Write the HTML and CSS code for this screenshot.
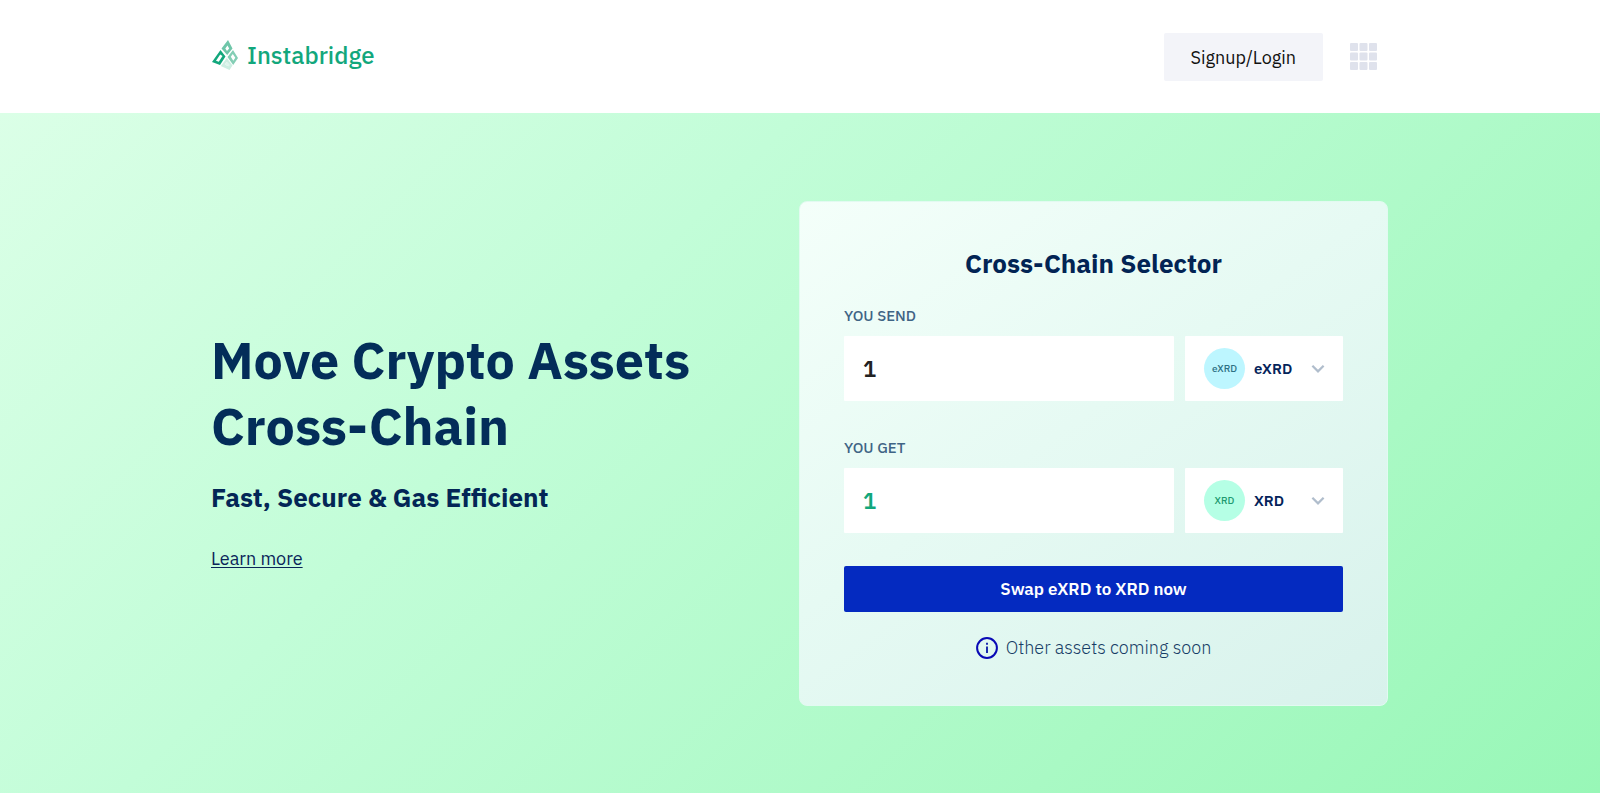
FILE: index.html
```html
<!DOCTYPE html>
<html lang="en">
<head>
<meta charset="utf-8">
<meta name="viewport" content="width=device-width, initial-scale=1">
<title>Instabridge</title>
<link rel="stylesheet" href="styles.css">
</head>
<body>
<header class="header">
  <div class="container header-inner">
    <a class="brand" href="#">
      <svg class="brand-mark" viewBox="0 0 28 32" aria-hidden="true">
        <path fill="#6fc6a9" fill-rule="evenodd" d="M18 1l4.500 8.500-5.300 6.500-5.700-6.500zM17.500 6.500l-2.200 3 1.700 2.500 2.200-2.600z"/>
        <path fill="#12a77c" fill-rule="evenodd" d="M10.500 11l5 6.500-5.500 8.500L2 23zM10.200 15.500l-4.200 6.200 2.800 1 3.700-5.700z"/>
        <path fill="#84ceb5" fill-rule="evenodd" d="M23 11l5 8-4.800 7-5.700-8zM22.800 15l-2 2.700 2.500 4 2-3z"/>
        <path fill="#cdeee2" fill-rule="evenodd" d="M16.800 19l5.700 7.500-3 4.500-8.700-4zM16.800 23l-2 2.600 3.700 1.700 1-1.400z"/>
        <path fill="#def4ec" d="M16.800 23l-2 2.600 3.700 1.700 1-1.400z"/>
      </svg>
      <span>Instabridge</span>
    </a>
    <div class="header-actions">
      <button class="login" type="button">Signup/Login</button>
      <button class="apps" type="button" aria-label="Apps">
        <svg viewBox="0 0 27 27" width="27" height="27" fill="#dfe2ec" aria-hidden="true">
          <rect width="8" height="8" rx="1"/><rect x="9.500" width="8" height="8" rx="1"/><rect x="19" width="8" height="8" rx="1"/>
          <rect y="9.500" width="8" height="8" rx="1"/><rect x="9.500" y="9.500" width="8" height="8" rx="1"/><rect x="19" y="9.500" width="8" height="8" rx="1"/>
          <rect y="19" width="8" height="8" rx="1"/><rect x="9.500" y="19" width="8" height="8" rx="1"/><rect x="19" y="19" width="8" height="8" rx="1"/>
        </svg>
      </button>
    </div>
  </div>
</header>
<main class="hero">
  <div class="container hero-inner">
    <section class="intro">
      <h1>Move Crypto Assets Cross-Chain</h1>
      <p class="tagline">Fast, Secure &amp; Gas Efficient</p>
      <a class="learn" href="#">Learn more</a>
    </section>
    <form class="card">
      <h2>Cross-Chain Selector</h2>
      <div class="field">
        <label for="send">YOU SEND</label>
        <div class="row">
          <input id="send" class="amount" type="text" value="1">
          <div class="asset">
            <span class="coin coin-exrd">eXRD</span>
            <select aria-label="Asset to send"><option>eXRD</option></select>
            <svg class="chevron" viewBox="0 0 12 8" aria-hidden="true"><path d="M1 1.500l5 5 5-5"/></svg>
          </div>
        </div>
      </div>
      <div class="field">
        <label for="get">YOU GET</label>
        <div class="row">
          <input id="get" class="amount amount-get" type="text" value="1">
          <div class="asset">
            <span class="coin coin-xrd">XRD</span>
            <select aria-label="Asset to get"><option>XRD</option></select>
            <svg class="chevron" viewBox="0 0 12 8" aria-hidden="true"><path d="M1 1.500l5 5 5-5"/></svg>
          </div>
        </div>
      </div>
      <button class="swap" type="button">Swap eXRD to XRD now</button>
      <p class="note">
        <svg viewBox="0 0 22 22" width="22" height="22" aria-hidden="true">
          <circle cx="11" cy="11" r="9.900" fill="none" stroke="#0909b5" stroke-width="2"/>
          <path d="M11 9.500v6.500M11 5.800v2" stroke="#1c2cae" stroke-width="2"/>
        </svg>
        <span>Other assets coming soon</span>
      </p>
    </form>
  </div>
</main>
</body>
</html>
```
FILE: styles.css
```css
* {
  box-sizing: border-box;
}

body {
  margin: 0;
  min-height: 100vh;
  display: flex;
  flex-direction: column;
  background: #fff;
  color: #032d59;
  font-family: "IBM Plex Sans", "Noto Sans", sans-serif;
  font-size: 18px;
}

button,
input,
select {
  font: inherit;
  border: 0;
}

.container {
  width: 100%;
  max-width: 1180px;
  margin: 0 auto;
  padding-right: 2px;
}

.header-inner {
  display: flex;
  align-items: center;
  justify-content: space-between;
  min-height: 113px;
  padding-right: 13px;
}

.brand {
  display: flex;
  align-items: center;
  gap: 9px;
  padding-bottom: 3px;
  color: #12a77c;
  font-size: 24px;
  font-weight: 500;
  text-decoration: none;
}

.brand-mark {
  width: 28px;
  height: 32px;
}

.header-actions {
  display: flex;
  align-items: center;
  gap: 27px;
}

.login {
  padding: 2px 27px 0;
  height: 48px;
  border-radius: 2px;
  background: #f3f4f9;
  color: #111;
}

.apps {
  display: flex;
  padding: 0;
  background: none;
}

.hero {
  flex: 1;
  display: flex;
  align-items: center;
  padding: 88px 0 87px;
  margin-bottom: 1px;
  background: linear-gradient(135deg, #dbffe7 0%, #c2fdd8 35%, #a9f9c4 75%, #98f7b7 100%);
}

.hero-inner {
  display: grid;
  grid-template-columns: 1fr 1fr;
  align-items: center;
}

h1,
h2,
p {
  margin: 0;
}

.intro {
  padding: 0 0 10px 1px;
}

h1 {
  font-size: 52px;
  font-weight: 700;
  line-height: 66px;
}

.tagline {
  margin-top: 20px;
  color: #032656;
  font-size: 26px;
  font-weight: 700;
  line-height: 36px;
}

.learn {
  display: inline-block;
  margin-top: 32px;
  color: #0a2459;
  line-height: 24px;
  text-underline-offset: 2px;
}

.card {
  padding: 43px 44px 45px;
  border: 1px solid #e2faf1;
  border-radius: 8px;
  background: linear-gradient(145deg, #f4fffa 0%, #e6faf3 45%, #d8f2ec 100%);
}

h2 {
  color: #022454;
  font-size: 26px;
  font-weight: 700;
  line-height: 36px;
  text-align: center;
}

.field {
  margin-top: 21px;
}

.field + .field {
  margin-top: 33px;
}

.field label {
  display: block;
  padding-bottom: 6px;
  color: #3f6485;
  font-size: 15px;
  font-weight: 500;
  line-height: 28px;
}

.row {
  display: grid;
  grid-template-columns: 1fr 158px;
  gap: 11px;
}

.amount {
  min-width: 0;
  height: 65px;
  padding: 0 19px;
  border-radius: 1px;
  background: #fff;
  color: #222;
  font-size: 22px;
  font-weight: 600;
}

.amount-get {
  color: #12a77c;
}

.asset {
  display: flex;
  align-items: center;
  padding: 0 18px 0 19px;
  border-radius: 1px;
  background: #fff;
}

.coin {
  flex: none;
  display: grid;
  place-items: center;
  width: 41px;
  height: 41px;
  margin-right: 9px;
  border-radius: 50%;
  font-size: 10px;
  font-weight: 500;
}

.coin-exrd {
  background: #bdf6ff;
  color: #2d7184;
}

.coin-xrd {
  background: #b5ffe5;
  color: #219a70;
}

.asset select {
  flex: 1;
  min-width: 0;
  padding: 0;
  appearance: none;
  background: none;
  color: #04235a;
  font-size: 15px;
  font-weight: 600;
}

.chevron {
  flex: none;
  width: 14px;
  height: 9px;
  fill: none;
  stroke: #b0bdcc;
  stroke-width: 2;
}

.swap {
  width: 100%;
  height: 46px;
  margin-top: 33px;
  border-radius: 2px;
  background: #042ac0;
  color: #fff;
  font-size: 17px;
  font-weight: 600;
}

.note {
  display: flex;
  align-items: center;
  justify-content: center;
  gap: 8px;
  margin-top: 24px;
  color: #173d66;
  font-weight: 300;
  line-height: 24px;
}
```
